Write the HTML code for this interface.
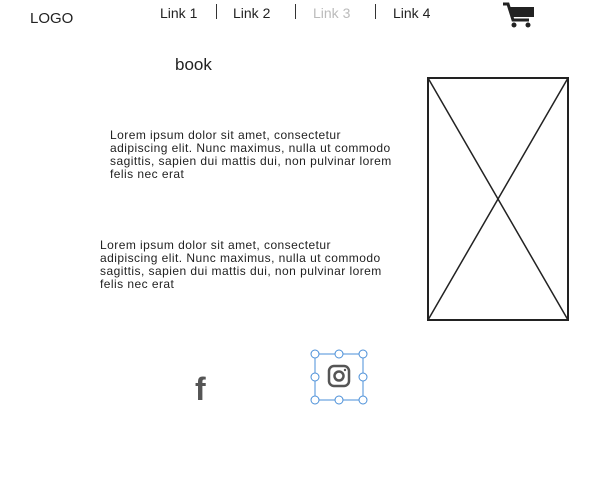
<!DOCTYPE html>
<html><head><style>
body{margin:0;width:603px;height:492px;background:#fff;position:relative;overflow:hidden;font-family:"Liberation Sans",sans-serif;color:#222}
.a{position:absolute;white-space:nowrap}
.p{font-size:12px;line-height:13px;letter-spacing:0.45px}
</style></head><body>
<div class="a" style="left:30px;top:10px;font-size:15px">LOGO</div>
<div class="a" style="left:160px;top:5px;font-size:14px">Link 1</div>
<div class="a" style="left:216px;top:4px;width:1px;height:15px;background:#333"></div>
<div class="a" style="left:233px;top:5px;font-size:14px">Link 2</div>
<div class="a" style="left:295px;top:4px;width:1px;height:15px;background:#333"></div>
<div class="a" style="left:313px;top:5px;font-size:14px;color:#bbb">Link 3</div>
<div class="a" style="left:375px;top:4px;width:1px;height:15px;background:#333"></div>
<div class="a" style="left:393px;top:5px;font-size:14px">Link 4</div>
<svg class="a" style="left:503px;top:2px" width="32" height="26" viewBox="0 0 32 26"><path d="M0 2h5l5 16h16" stroke="#222" stroke-width="3" fill="none"/><path d="M7 5h24v10H10z" fill="#222"/><circle cx="11" cy="23" r="2.5" fill="#222"/><circle cx="25" cy="23" r="2.5" fill="#222"/></svg>
<div class="a" style="left:175px;top:55px;font-size:17px">book</div>
<div class="a p" style="left:110px;top:129px">Lorem ipsum dolor sit amet, consectetur<br>adipiscing elit. Nunc maximus, nulla ut commodo<br>sagittis, sapien dui mattis dui, non pulvinar lorem<br>felis nec erat</div>
<div class="a p" style="left:100px;top:239px">Lorem ipsum dolor sit amet, consectetur<br>adipiscing elit. Nunc maximus, nulla ut commodo<br>sagittis, sapien dui mattis dui, non pulvinar lorem<br>felis nec erat</div>
<svg class="a" style="left:426px;top:76px" width="144" height="246"><rect x="2" y="2" width="140" height="242" fill="none" stroke="#222" stroke-width="2"/><line x1="2" y1="2" x2="142" y2="244" stroke="#222" stroke-width="1.5"/><line x1="142" y1="2" x2="2" y2="244" stroke="#222" stroke-width="1.5"/></svg>
<div class="a" style="left:195px;top:371px;font-size:32px;font-weight:bold;color:#555">f</div>
<svg class="a" style="left:309px;top:349px" width="60" height="56"><rect x="6" y="5" width="48" height="46" fill="none" stroke="#4a8fd8" stroke-width="1"/>
<g fill="#fff" stroke="#4a8fd8"><circle cx="6" cy="5" r="4"/><circle cx="30" cy="5" r="4"/><circle cx="54" cy="5" r="4"/><circle cx="6" cy="28" r="4"/><circle cx="54" cy="28" r="4"/><circle cx="6" cy="51" r="4"/><circle cx="30" cy="51" r="4"/><circle cx="54" cy="51" r="4"/></g>
<rect x="20" y="17" width="20" height="20" rx="5" fill="none" stroke="#555" stroke-width="2.5"/><circle cx="30" cy="27" r="4.5" fill="none" stroke="#555" stroke-width="2.5"/><circle cx="36" cy="21" r="1.2" fill="#555"/></svg>
</body></html>
